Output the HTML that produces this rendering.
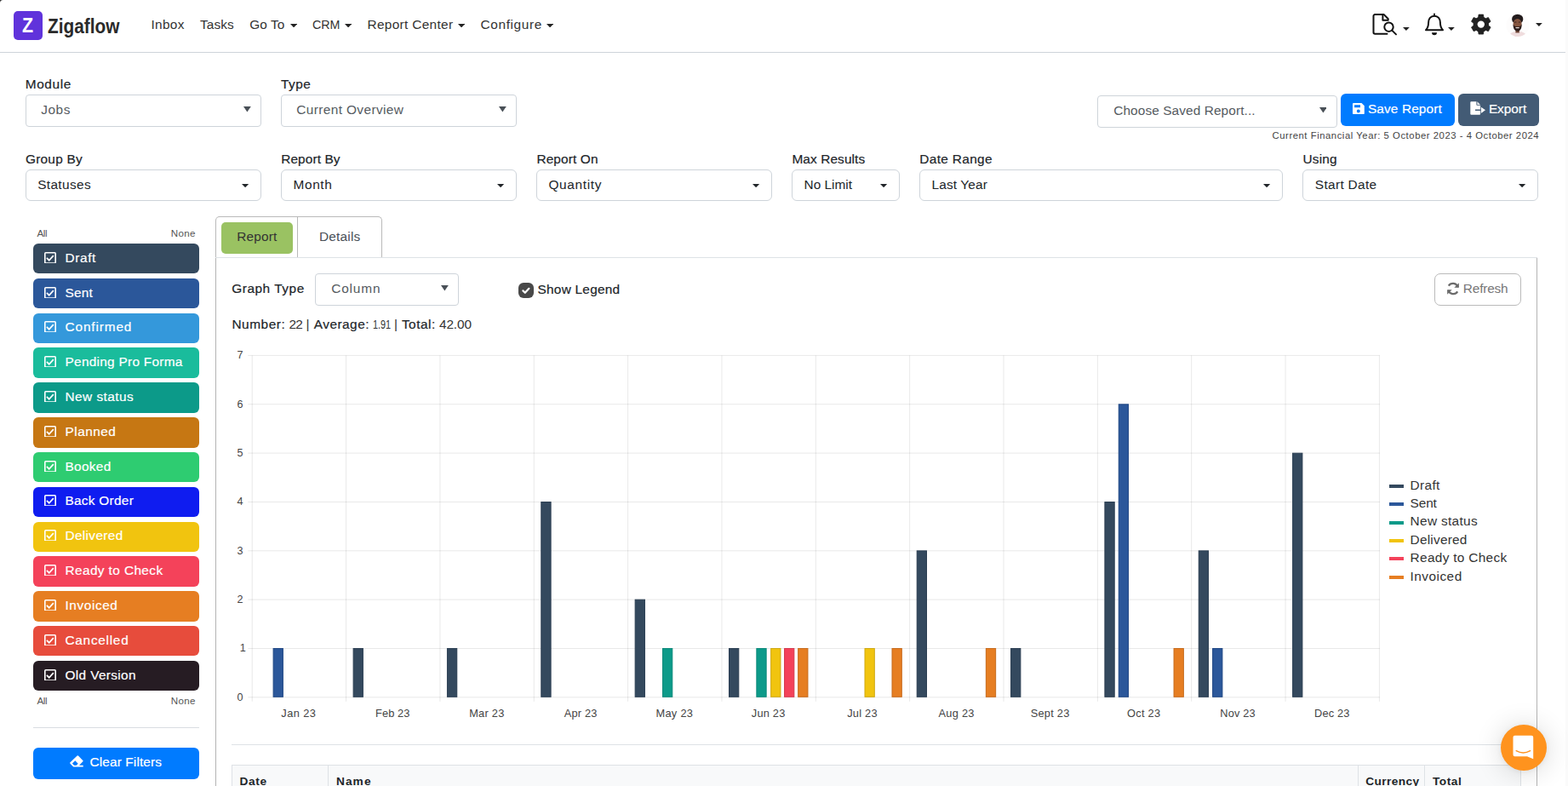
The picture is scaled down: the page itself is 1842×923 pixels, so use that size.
<!DOCTYPE html>
<html lang="en">
<head>
<meta charset="utf-8">
<title>Zigaflow - Report Center</title>
<style>
html,body{margin:0;padding:0;background:#fff;}
body{width:1842px;height:923px;overflow:hidden;font-family:"Liberation Sans",sans-serif;}
#page{position:relative;width:1842px;height:923px;overflow:hidden;background:#fff;}
.b{position:absolute;box-sizing:border-box;display:block;}
.t{position:absolute;white-space:pre;line-height:1;font-family:"Liberation Sans",sans-serif;}
a.t{text-decoration:none;}
label.t{margin:0;}
header,nav,section,aside,main{display:block;margin:0;padding:0;}

</style>
</head>
<body>
<div id="page">
<header class="topbar">
<svg class="b" style="left:0;top:0" width="5" height="5" viewBox="0 0 5 5"><path d="M0 0h3.600A3.600 3.600 0 0 0 0 3.600z" fill="#2e2e2e"/></svg>
<div class="b" style="left:1839px;top:0px;width:3px;height:923px;background:#fafafa"></div>
<div class="b" style="left:0px;top:61px;width:1839px;height:1px;background:#ced4da"></div>
<div class="b" style="left:16px;top:13px;width:34px;height:34px;background:#6033db;border-radius:5px"></div>
<span class="t" style="left:26.1px;top:17.6px;font-size:24.8px;font-weight:700;color:#fff;transform:scaleX(.86);transform-origin:0 0">Z</span>
<span class="t" style="left:56.3px;top:19.1px;font-size:24.5px;font-weight:700;color:#2a2a2a;transform:scaleX(.851);transform-origin:0 0">Zigaflow</span>
<svg class="b" style="left:341.2px;top:28.1px" width="8.2" height="4.4" viewBox="0 0 8.2 4.4"><polygon points="0,0 8.2,0 4.1,4.4" fill="#222"/></svg>
<svg class="b" style="left:405.0px;top:28.1px" width="8.2" height="4.4" viewBox="0 0 8.2 4.4"><polygon points="0,0 8.2,0 4.1,4.4" fill="#222"/></svg>
<svg class="b" style="left:538.0px;top:28.1px" width="8.2" height="4.4" viewBox="0 0 8.2 4.4"><polygon points="0,0 8.2,0 4.1,4.4" fill="#222"/></svg>
<svg class="b" style="left:642.2px;top:28.1px" width="8.2" height="4.4" viewBox="0 0 8.2 4.4"><polygon points="0,0 8.2,0 4.1,4.4" fill="#222"/></svg>
<svg class="b" style="left:1610px;top:13px" width="34" height="32" viewBox="0 0 34 32" fill="none" stroke="#111" stroke-width="2" stroke-linejoin="round" stroke-linecap="round">
<path d="M19.5 26.8H5.2a1.7 1.7 0 0 1-1.7-1.7V5.8a1.7 1.7 0 0 1 1.7-1.7h10.6l5 5.2"/>
<path d="M14.400 4.300v6.500h6.300"/>
<circle cx="21.500" cy="18.700" r="5.200"/>
<path d="M25.2 22.6l4.8 4.8"/>
</svg>
<svg class="b" style="left:1648.1px;top:31.9px" width="7.8" height="4.0" viewBox="0 0 7.8 4.0"><polygon points="0,0 7.8,0 3.9,4.0" fill="#222"/></svg>
<svg class="b" style="left:1672px;top:13px" width="26" height="30" viewBox="0 0 26 30" fill="none" stroke="#111" stroke-width="2" stroke-linejoin="round" stroke-linecap="round">
<path d="M13 3.4v2"/>
<path d="M3 22.2h20c-2.4-2.2-3.1-4.6-3.1-8.6 0-4.600-2.600-7.900-6.900-7.900s-6.900 3.300-6.900 7.900c0 4-0.700 6.400-3.100 8.600z"/>
<path d="M10 25.300h6a3 3 0 0 1-6 0z" fill="#111" stroke="none"/>
</svg>
<svg class="b" style="left:1701.0px;top:31.9px" width="7.8" height="4.0" viewBox="0 0 7.8 4.0"><polygon points="0,0 7.8,0 3.9,4.0" fill="#222"/></svg>
<svg class="b" style="left:1727px;top:15px" width="26" height="28" viewBox="0 0 26 28"><circle cx="12.8" cy="13.6" r="8.9" fill="#212121"/><path d="M9.65 5.38 L10.06 2.12 L15.54 2.12 L15.95 5.38 L18.34 6.76 L21.37 5.49 L24.11 10.24 L21.49 12.22 L21.49 14.98 L24.11 16.96 L21.37 21.71 L18.34 20.44 L15.95 21.82 L15.54 25.08 L10.06 25.08 L9.65 21.82 L7.26 20.44 L4.23 21.71 L1.49 16.96 L4.11 14.98 L4.11 12.22 L1.49 10.24 L4.23 5.49 L7.26 6.76Z M8.70 13.60 a4.1 4.1 0 1 0 8.2 0 a4.1 4.1 0 1 0 -8.2 0Z" fill="#212121" fill-rule="evenodd" stroke="#212121" stroke-width="0.8" stroke-linejoin="round"/><circle cx="12.8" cy="13.6" r="4.2" fill="#fff"/></svg>
<svg class="b" style="left:1769px;top:15px" width="28" height="29" viewBox="0 0 28 29">
<defs><clipPath id="av"><circle cx="14" cy="14.500" r="13.600"/></clipPath></defs>
<circle cx="14" cy="14.500" r="13.600" fill="#fdfcfc"/>
<g clip-path="url(#av)">
<ellipse cx="14" cy="28.600" rx="11" ry="6.800" fill="#efdcdd"/>
<rect x="11.400" y="19.500" width="4.400" height="4" fill="#6f4434"/>
<ellipse cx="13.700" cy="7.400" rx="6.600" ry="5.700" fill="#231c1d"/>
<ellipse cx="13.600" cy="12.900" rx="5" ry="6" fill="#85553f"/>
<path d="M8.500 13.200C8.500 19 10.500 21.600 13.600 21.600S18.700 19 18.700 13.200C17.700 15.700 16.200 16.200 13.600 16.200S9.500 15.700 8.500 13.200z" fill="#2c1d1b"/>
<rect x="11.300" y="16.900" width="4.600" height="1.400" rx="0.700" fill="#eadfdb"/>
<rect x="9.800" y="10.600" width="2.600" height="0.900" fill="#3a2520"/>
<rect x="14.800" y="10.600" width="2.600" height="0.900" fill="#3a2520"/>
</g></svg>
<svg class="b" style="left:1804.0px;top:27.0px" width="7.8" height="4.0" viewBox="0 0 7.8 4.0"><polygon points="0,0 7.8,0 3.9,4.0" fill="#222"/></svg>
</header>
<nav class="mainnav">
<a class="t" style="left:177.4px;top:21.1px;font-size:15.4px;color:#333;letter-spacing:0.36px;">Inbox</a>
<a class="t" style="left:235.0px;top:21.1px;font-size:15.4px;color:#333;letter-spacing:0.09px;">Tasks</a>
<a class="t" style="left:293.2px;top:21.1px;font-size:15.4px;color:#333;letter-spacing:0.10px;">Go To</a>
<a class="t" style="left:366.6px;top:21.1px;font-size:15.4px;color:#333;transform:scaleX(0.927);transform-origin:0 0;">CRM</a>
<a class="t" style="left:431.5px;top:21.1px;font-size:15.4px;color:#333;letter-spacing:0.32px;">Report Center</a>
<a class="t" style="left:564.6px;top:21.1px;font-size:15.4px;color:#333;letter-spacing:0.61px;">Configure</a>
</nav>
<section class="filters">
<div class="b" style="left:30px;top:111px;width:277px;height:38px;border:1px solid #ced4da;border-radius:4px;background:#fff"></div>
<div class="b" style="left:330px;top:111px;width:277px;height:38px;border:1px solid #ced4da;border-radius:4px;background:#fff"></div>
<div class="b" style="left:1289px;top:112px;width:282px;height:38px;border:1px solid #ced4da;border-radius:4px;background:#fff"></div>
<svg class="b" style="left:285.8px;top:125.2px" width="8.8" height="6.6" viewBox="0 0 8.8 6.6"><polygon points="0,0 8.8,0 4.4,6.6" fill="#495057"/></svg>
<svg class="b" style="left:585.9px;top:125.2px" width="8.8" height="6.6" viewBox="0 0 8.8 6.6"><polygon points="0,0 8.8,0 4.4,6.6" fill="#495057"/></svg>
<svg class="b" style="left:1549.5px;top:126.2px" width="8.8" height="6.6" viewBox="0 0 8.8 6.6"><polygon points="0,0 8.8,0 4.4,6.6" fill="#495057"/></svg>
<div class="b" style="left:1575px;top:110px;width:134px;height:38px;background:#007bff;border-radius:6px"></div>
<div class="b" style="left:1713px;top:110px;width:95px;height:38px;background:#435b75;border-radius:6px"></div>
<svg class="b" style="left:1589px;top:120.800px" width="14" height="13.400" viewBox="0 0 14 13.400"><path fill="#fff" fill-rule="evenodd" d="M1.100 0H10.500L13.800 3.300V12.100a1.100 1.100 0 0 1-1.100 1.100H1.100A1.100 1.100 0 0 1 0 12.100V1.100A1.100 1.100 0 0 1 1.100 0zM2.100 2.200v3h6.900v-3zM6.800 7.400a2 2 0 1 0 0 4 2 2 0 0 0 0-4z"/></svg>
<svg class="b" style="left:1727px;top:119px" width="18.400" height="16" viewBox="0 0 18.400 16"><path fill="#fff" d="M1.300 0.200H7.400V4a0.800 0.800 0 0 0 0.800 0.800H12.100V9.600H6V10.900H12.100V14.800a1 1 0 0 1-1 1H1.300a1 1 0 0 1-1-1V1.200a1 1 0 0 1 1-1z"/><path fill="#e9ecf0" d="M8.400 0.300L12 4H8.400z"/><path fill="#fff" d="M12.900 6.700L18 10.300 12.900 13.900z"/></svg>
<div class="b" style="left:30px;top:199px;width:277px;height:37px;border:1px solid #ced4da;border-radius:6px;background:#fff"></div>
<svg class="b" style="left:284.4px;top:216.3px" width="8.2" height="4.2" viewBox="0 0 8.2 4.2"><polygon points="0,0 8.2,0 4.1,4.2" fill="#212529"/></svg>
<div class="b" style="left:330px;top:199px;width:277px;height:37px;border:1px solid #ced4da;border-radius:6px;background:#fff"></div>
<svg class="b" style="left:584.4px;top:216.3px" width="8.2" height="4.2" viewBox="0 0 8.2 4.2"><polygon points="0,0 8.2,0 4.1,4.2" fill="#212529"/></svg>
<div class="b" style="left:630px;top:199px;width:277px;height:37px;border:1px solid #ced4da;border-radius:6px;background:#fff"></div>
<svg class="b" style="left:884.4px;top:216.3px" width="8.2" height="4.2" viewBox="0 0 8.2 4.2"><polygon points="0,0 8.2,0 4.1,4.2" fill="#212529"/></svg>
<div class="b" style="left:930px;top:199px;width:127px;height:37px;border:1px solid #ced4da;border-radius:6px;background:#fff"></div>
<svg class="b" style="left:1034.4px;top:216.3px" width="8.2" height="4.2" viewBox="0 0 8.2 4.2"><polygon points="0,0 8.2,0 4.1,4.2" fill="#212529"/></svg>
<div class="b" style="left:1080px;top:199px;width:427px;height:37px;border:1px solid #ced4da;border-radius:6px;background:#fff"></div>
<svg class="b" style="left:1484.4px;top:216.3px" width="8.2" height="4.2" viewBox="0 0 8.2 4.2"><polygon points="0,0 8.2,0 4.1,4.2" fill="#212529"/></svg>
<div class="b" style="left:1530px;top:199px;width:277px;height:37px;border:1px solid #ced4da;border-radius:6px;background:#fff"></div>
<svg class="b" style="left:1784.4px;top:216.3px" width="8.2" height="4.2" viewBox="0 0 8.2 4.2"><polygon points="0,0 8.2,0 4.1,4.2" fill="#212529"/></svg>
<label class="t" style="left:29.7px;top:91.2px;font-size:15.4px;color:#212529;letter-spacing:0.64px;-webkit-text-stroke:0.2px #212529;">Module</label>
<label class="t" style="left:330.0px;top:91.2px;font-size:15.4px;color:#212529;letter-spacing:0.48px;-webkit-text-stroke:0.2px #212529;">Type</label>
<label class="t" style="left:30.0px;top:179.2px;font-size:15.4px;color:#212529;letter-spacing:0.23px;-webkit-text-stroke:0.2px #212529;">Group By</label>
<label class="t" style="left:330.2px;top:179.2px;font-size:15.4px;color:#212529;letter-spacing:0.11px;-webkit-text-stroke:0.2px #212529;">Report By</label>
<label class="t" style="left:630.4px;top:179.2px;font-size:15.4px;color:#212529;letter-spacing:0.14px;-webkit-text-stroke:0.2px #212529;">Report On</label>
<label class="t" style="left:930.4px;top:179.2px;font-size:15.4px;color:#212529;letter-spacing:0.11px;-webkit-text-stroke:0.2px #212529;">Max Results</label>
<label class="t" style="left:1080.3px;top:179.2px;font-size:15.4px;color:#212529;letter-spacing:0.35px;-webkit-text-stroke:0.2px #212529;">Date Range</label>
<label class="t" style="left:1530.6px;top:179.2px;font-size:15.4px;color:#212529;letter-spacing:0.16px;-webkit-text-stroke:0.2px #212529;">Using</label>
<span class="t" style="left:48.2px;top:121.2px;font-size:15.4px;color:#555b61;letter-spacing:0.59px;">Jobs</span>
<span class="t" style="left:348.2px;top:121.2px;font-size:15.4px;color:#555b61;letter-spacing:0.40px;">Current Overview</span>
<span class="t" style="left:1308.2px;top:122.4px;font-size:15.4px;color:#555b61;letter-spacing:0.10px;">Choose Saved Report...</span>
<span class="t" style="left:1606.9px;top:120.2px;font-size:15.4px;color:#fff;letter-spacing:0.13px;-webkit-text-stroke:0.2px #fff;">Save Report</span>
<span class="t" style="left:1748.9px;top:120.2px;font-size:15.4px;color:#fff;letter-spacing:-0.04px;-webkit-text-stroke:0.2px #fff;">Export</span>
<span class="t" style="left:1494.6px;top:154.0px;font-size:11.3px;color:#444;letter-spacing:0.54px;">Current Financial Year: 5 October 2023 - 4 October 2024</span>
<span class="t" style="left:44.2px;top:209.2px;font-size:15.4px;color:#212529;letter-spacing:0.36px;">Statuses</span>
<span class="t" style="left:344.5px;top:209.2px;font-size:15.4px;color:#212529;letter-spacing:0.63px;">Month</span>
<span class="t" style="left:644.5px;top:209.2px;font-size:15.4px;color:#212529;letter-spacing:0.65px;">Quantity</span>
<span class="t" style="left:944.6px;top:209.2px;font-size:15.4px;color:#212529;letter-spacing:-0.01px;">No Limit</span>
<span class="t" style="left:1094.5px;top:209.2px;font-size:15.4px;color:#212529;letter-spacing:0.15px;">Last Year</span>
<span class="t" style="left:1544.8px;top:209.2px;font-size:15.4px;color:#212529;letter-spacing:0.34px;">Start Date</span>
</section>
<aside class="statuses">
<div class="b" style="left:39px;top:286px;width:195px;height:35px;background:#34495e;border-radius:6px"></div>
<svg class="b" style="left:51.8px;top:295.60px" width="14" height="13.800" viewBox="0 0 14 13.800" fill="none" stroke="#fff"><rect x="0.800" y="0.800" width="12.400" height="12.200" rx="0.900" stroke-width="1.600"/><path d="M2.900 6.900l2.800 2.800 5.100-5.600" stroke-width="1.700"/></svg>
<div class="b" style="left:39px;top:327px;width:195px;height:35px;background:#2b579a;border-radius:6px"></div>
<svg class="b" style="left:51.8px;top:336.60px" width="14" height="13.800" viewBox="0 0 14 13.800" fill="none" stroke="#fff"><rect x="0.800" y="0.800" width="12.400" height="12.200" rx="0.900" stroke-width="1.600"/><path d="M2.900 6.900l2.800 2.800 5.100-5.600" stroke-width="1.700"/></svg>
<div class="b" style="left:39px;top:368px;width:195px;height:35px;background:#3498db;border-radius:6px"></div>
<svg class="b" style="left:51.8px;top:376.60px" width="14" height="13.800" viewBox="0 0 14 13.800" fill="none" stroke="#fff"><rect x="0.800" y="0.800" width="12.400" height="12.200" rx="0.900" stroke-width="1.600"/><path d="M2.900 6.900l2.800 2.800 5.100-5.600" stroke-width="1.700"/></svg>
<div class="b" style="left:39px;top:408px;width:195px;height:36px;background:#1abc9c;border-radius:6px"></div>
<svg class="b" style="left:51.8px;top:417.60px" width="14" height="13.800" viewBox="0 0 14 13.800" fill="none" stroke="#fff"><rect x="0.800" y="0.800" width="12.400" height="12.200" rx="0.900" stroke-width="1.600"/><path d="M2.900 6.900l2.800 2.800 5.100-5.600" stroke-width="1.700"/></svg>
<div class="b" style="left:39px;top:449px;width:195px;height:36px;background:#0c9a89;border-radius:6px"></div>
<svg class="b" style="left:51.8px;top:458.60px" width="14" height="13.800" viewBox="0 0 14 13.800" fill="none" stroke="#fff"><rect x="0.800" y="0.800" width="12.400" height="12.200" rx="0.900" stroke-width="1.600"/><path d="M2.900 6.900l2.800 2.800 5.100-5.600" stroke-width="1.700"/></svg>
<div class="b" style="left:39px;top:490px;width:195px;height:36px;background:#c67713;border-radius:6px"></div>
<svg class="b" style="left:51.8px;top:499.60px" width="14" height="13.800" viewBox="0 0 14 13.800" fill="none" stroke="#fff"><rect x="0.800" y="0.800" width="12.400" height="12.200" rx="0.900" stroke-width="1.600"/><path d="M2.900 6.900l2.800 2.800 5.100-5.600" stroke-width="1.700"/></svg>
<div class="b" style="left:39px;top:531px;width:195px;height:35px;background:#2ecc71;border-radius:6px"></div>
<svg class="b" style="left:51.8px;top:540.60px" width="14" height="13.800" viewBox="0 0 14 13.800" fill="none" stroke="#fff"><rect x="0.800" y="0.800" width="12.400" height="12.200" rx="0.900" stroke-width="1.600"/><path d="M2.900 6.900l2.800 2.800 5.100-5.600" stroke-width="1.700"/></svg>
<div class="b" style="left:39px;top:572px;width:195px;height:35px;background:#0f1cf0;border-radius:6px"></div>
<svg class="b" style="left:51.8px;top:580.60px" width="14" height="13.800" viewBox="0 0 14 13.800" fill="none" stroke="#fff"><rect x="0.800" y="0.800" width="12.400" height="12.200" rx="0.900" stroke-width="1.600"/><path d="M2.900 6.900l2.800 2.800 5.100-5.600" stroke-width="1.700"/></svg>
<div class="b" style="left:39px;top:613px;width:195px;height:35px;background:#f1c40f;border-radius:6px"></div>
<svg class="b" style="left:51.8px;top:621.60px" width="14" height="13.800" viewBox="0 0 14 13.800" fill="none" stroke="#fff"><rect x="0.800" y="0.800" width="12.400" height="12.200" rx="0.900" stroke-width="1.600"/><path d="M2.900 6.900l2.800 2.800 5.100-5.600" stroke-width="1.700"/></svg>
<div class="b" style="left:39px;top:653px;width:195px;height:36px;background:#f4425a;border-radius:6px"></div>
<svg class="b" style="left:51.8px;top:662.60px" width="14" height="13.800" viewBox="0 0 14 13.800" fill="none" stroke="#fff"><rect x="0.800" y="0.800" width="12.400" height="12.200" rx="0.900" stroke-width="1.600"/><path d="M2.900 6.900l2.800 2.800 5.100-5.600" stroke-width="1.700"/></svg>
<div class="b" style="left:39px;top:694px;width:195px;height:36px;background:#e67e22;border-radius:6px"></div>
<svg class="b" style="left:51.8px;top:703.60px" width="14" height="13.800" viewBox="0 0 14 13.800" fill="none" stroke="#fff"><rect x="0.800" y="0.800" width="12.400" height="12.200" rx="0.900" stroke-width="1.600"/><path d="M2.900 6.900l2.800 2.800 5.100-5.600" stroke-width="1.700"/></svg>
<div class="b" style="left:39px;top:735px;width:195px;height:35px;background:#e74c3c;border-radius:6px"></div>
<svg class="b" style="left:51.8px;top:744.60px" width="14" height="13.800" viewBox="0 0 14 13.800" fill="none" stroke="#fff"><rect x="0.800" y="0.800" width="12.400" height="12.200" rx="0.900" stroke-width="1.600"/><path d="M2.900 6.900l2.800 2.800 5.100-5.600" stroke-width="1.700"/></svg>
<div class="b" style="left:39px;top:776px;width:195px;height:35px;background:#261c23;border-radius:6px"></div>
<svg class="b" style="left:51.8px;top:785.60px" width="14" height="13.800" viewBox="0 0 14 13.800" fill="none" stroke="#fff"><rect x="0.800" y="0.800" width="12.400" height="12.200" rx="0.900" stroke-width="1.600"/><path d="M2.900 6.900l2.800 2.800 5.100-5.600" stroke-width="1.700"/></svg>
<div class="b" style="left:39px;top:854px;width:195px;height:1px;background:#d9dde1"></div>
<div class="b" style="left:39px;top:878px;width:195px;height:37px;background:#007bff;border-radius:6px"></div>
<svg class="b" style="left:82.400px;top:887.400px" width="16" height="14" viewBox="0 0 16 14"><path fill="#fff" fill-rule="evenodd" d="M8.600 0.600a1 1 0 0 1 1.400 0L15.300 5.900a1 1 0 0 1 0 1.400L11 11.700H15.700V13.400H4.200L0.500 9.700a1 1 0 0 1 0-1.400zM6.300 6.300L2.900 9.500 5 11.700H7.800L9.700 9.800z"/></svg>
<span class="t" style="left:43.4px;top:268.4px;font-size:11.6px;color:#555;letter-spacing:-0.30px;">All</span>
<span class="t" style="left:200.8px;top:268.4px;font-size:11.6px;color:#555;letter-spacing:0.33px;">None</span>
<span class="t" style="left:43.4px;top:817.2px;font-size:11.6px;color:#555;letter-spacing:-0.30px;">All</span>
<span class="t" style="left:200.8px;top:817.2px;font-size:11.6px;color:#555;letter-spacing:0.33px;">None</span>
<span class="t" style="left:76.5px;top:295.0px;font-size:15.4px;color:#fff;letter-spacing:0.61px;-webkit-text-stroke:0.2px #fff;">Draft</span>
<span class="t" style="left:76.5px;top:336.0px;font-size:15.4px;color:#fff;letter-spacing:0.21px;-webkit-text-stroke:0.2px #fff;">Sent</span>
<span class="t" style="left:76.5px;top:376.0px;font-size:15.4px;color:#fff;letter-spacing:0.86px;-webkit-text-stroke:0.2px #fff;">Confirmed</span>
<span class="t" style="left:76.5px;top:417.0px;font-size:15.4px;color:#fff;letter-spacing:0.28px;-webkit-text-stroke:0.2px #fff;">Pending Pro Forma</span>
<span class="t" style="left:76.5px;top:458.0px;font-size:15.4px;color:#fff;letter-spacing:0.46px;-webkit-text-stroke:0.2px #fff;">New status</span>
<span class="t" style="left:76.5px;top:499.0px;font-size:15.4px;color:#fff;letter-spacing:0.49px;-webkit-text-stroke:0.2px #fff;">Planned</span>
<span class="t" style="left:76.5px;top:540.0px;font-size:15.4px;color:#fff;letter-spacing:0.32px;-webkit-text-stroke:0.2px #fff;">Booked</span>
<span class="t" style="left:76.5px;top:580.0px;font-size:15.4px;color:#fff;letter-spacing:0.27px;-webkit-text-stroke:0.2px #fff;">Back Order</span>
<span class="t" style="left:76.5px;top:621.0px;font-size:15.4px;color:#fff;letter-spacing:0.34px;-webkit-text-stroke:0.2px #fff;">Delivered</span>
<span class="t" style="left:76.5px;top:662.0px;font-size:15.4px;color:#fff;letter-spacing:0.39px;-webkit-text-stroke:0.2px #fff;">Ready to Check</span>
<span class="t" style="left:76.5px;top:703.0px;font-size:15.4px;color:#fff;letter-spacing:0.58px;-webkit-text-stroke:0.2px #fff;">Invoiced</span>
<span class="t" style="left:76.5px;top:744.0px;font-size:15.4px;color:#fff;letter-spacing:0.72px;-webkit-text-stroke:0.2px #fff;">Cancelled</span>
<span class="t" style="left:76.5px;top:785.0px;font-size:15.4px;color:#fff;letter-spacing:0.35px;-webkit-text-stroke:0.2px #fff;">Old Version</span>
<span class="t" style="left:105.5px;top:887.4px;font-size:15.4px;color:#fff;letter-spacing:0.13px;-webkit-text-stroke:0.2px #fff;">Clear Filters</span>
</aside>
<main class="report">
<div class="b" style="left:253px;top:254px;width:196px;height:49px;border:1px solid #b9b9b9;border-bottom:none;border-radius:5px 5px 0 0;background:#fff"></div>
<div class="b" style="left:349px;top:255px;width:1px;height:48px;background:#b9b9b9"></div>
<div class="b" style="left:260px;top:261px;width:84px;height:37px;background:#9ac262;border-radius:5px"></div>
<div class="b" style="left:253px;top:302px;width:1553px;height:1px;background:#dee2e6"></div>
<div class="b" style="left:253px;top:303px;width:1px;height:620px;background:#b4b4b4"></div>
<div class="b" style="left:1805px;top:303px;width:1px;height:620px;background:#b4b4b4"></div>
<div class="b" style="left:370px;top:321px;width:169px;height:38px;border:1px solid #ced4da;border-radius:4px;background:#fff"></div>
<svg class="b" style="left:518.2px;top:335.1px" width="8.8" height="6.6" viewBox="0 0 8.8 6.6"><polygon points="0,0 8.8,0 4.4,6.6" fill="#495057"/></svg>
<div class="b" style="left:609px;top:332px;width:18px;height:18px;background:#494949;border-radius:6px"></div>
<svg class="b" style="left:609px;top:332px" width="18" height="18" viewBox="0 0 18 18" fill="none" stroke="#fff" stroke-width="2.200" stroke-linecap="round" stroke-linejoin="round"><path d="M5.400 9.400l2.400 2.400 4.600-5"/></svg>
<div class="b" style="left:1685px;top:321px;width:102px;height:38px;border:1px solid #bababa;border-radius:7px;background:#fff"></div>
<svg class="b" style="left:1699px;top:330.600px" width="16" height="16" viewBox="0 0 16 16" fill="none" stroke="#6b6b6b" stroke-width="2.300"><path d="M13.600 6.300A6 6 0 0 0 2.800 4.600"/><path d="M2.400 9.700a6 6 0 0 0 10.800 1.700"/><path d="M14.900 1.200v5.600H9.300z" fill="#6b6b6b" stroke="none"/><path d="M1.100 14.800V9.200h5.600z" fill="#6b6b6b" stroke="none"/></svg>
<span class="t" style="left:278.3px;top:270.0px;font-size:15.4px;color:#333;letter-spacing:0.14px;">Report</span>
<span class="t" style="left:374.9px;top:270.0px;font-size:15.4px;color:#495057;letter-spacing:0.23px;">Details</span>
<span class="t" style="left:272.2px;top:331.3px;font-size:15.4px;color:#212529;letter-spacing:0.55px;-webkit-text-stroke:0.2px #212529;">Graph Type</span>
<span class="t" style="left:389.2px;top:331.3px;font-size:15.4px;color:#555b61;letter-spacing:0.85px;">Column</span>
<span class="t" style="left:631.5px;top:331.8px;font-size:15.4px;color:#212529;letter-spacing:0.25px;-webkit-text-stroke:0.2px #212529;">Show Legend</span>
<span class="t" style="left:1718.8px;top:330.7px;font-size:15.4px;color:#777;letter-spacing:-0.17px;">Refresh</span>
<span class="t" style="left:272.4px;top:373.3px;font-size:15.4px;color:#212529;letter-spacing:0.55px;-webkit-text-stroke:0.2px #212529;">Number:</span>
<span class="t" style="left:339.5px;top:373.3px;font-size:15.4px;color:#333;letter-spacing:-0.82px;">22</span>
<span class="t" style="left:359.6px;top:373.3px;font-size:15.4px;color:#333;">|</span>
<span class="t" style="left:368.8px;top:373.3px;font-size:15.4px;color:#212529;letter-spacing:0.48px;-webkit-text-stroke:0.2px #212529;">Average:</span>
<span class="t" style="left:437.8px;top:373.3px;font-size:15.4px;color:#333;transform:scaleX(0.704);transform-origin:0 0;">1.91</span>
<span class="t" style="left:462.9px;top:373.3px;font-size:15.4px;color:#333;">|</span>
<span class="t" style="left:471.9px;top:373.3px;font-size:15.4px;color:#212529;letter-spacing:0.50px;-webkit-text-stroke:0.2px #212529;">Total:</span>
<span class="t" style="left:516.0px;top:373.3px;font-size:15.4px;color:#333;letter-spacing:-0.13px;">42.00</span>
</main>
<section class="chart">
<svg class="b" style="left:286px;top:410px" width="1340" height="420" viewBox="0 0 1340 420"><rect x="5.30" y="408.30" width="1329.60" height="1" fill="#000" fill-opacity="0.09"/><rect x="5.30" y="350.96" width="1329.60" height="1" fill="#000" fill-opacity="0.09"/><rect x="5.30" y="293.61" width="1329.60" height="1" fill="#000" fill-opacity="0.09"/><rect x="5.30" y="236.27" width="1329.60" height="1" fill="#000" fill-opacity="0.09"/><rect x="5.30" y="178.93" width="1329.60" height="1" fill="#000" fill-opacity="0.09"/><rect x="5.30" y="121.59" width="1329.60" height="1" fill="#000" fill-opacity="0.09"/><rect x="5.30" y="64.24" width="1329.60" height="1" fill="#000" fill-opacity="0.09"/><rect x="5.30" y="6.90" width="1329.60" height="1" fill="#000" fill-opacity="0.09"/><rect x="9.70" y="7.40" width="1" height="406.40" fill="#000" fill-opacity="0.09"/><rect x="120.05" y="7.40" width="1" height="406.40" fill="#000" fill-opacity="0.09"/><rect x="230.40" y="7.40" width="1" height="406.40" fill="#000" fill-opacity="0.09"/><rect x="340.75" y="7.40" width="1" height="406.40" fill="#000" fill-opacity="0.09"/><rect x="451.10" y="7.40" width="1" height="406.40" fill="#000" fill-opacity="0.09"/><rect x="561.45" y="7.40" width="1" height="406.40" fill="#000" fill-opacity="0.09"/><rect x="671.80" y="7.40" width="1" height="406.40" fill="#000" fill-opacity="0.09"/><rect x="782.15" y="7.40" width="1" height="406.40" fill="#000" fill-opacity="0.09"/><rect x="892.50" y="7.40" width="1" height="406.40" fill="#000" fill-opacity="0.09"/><rect x="1002.85" y="7.40" width="1" height="406.40" fill="#000" fill-opacity="0.09"/><rect x="1113.20" y="7.40" width="1" height="406.40" fill="#000" fill-opacity="0.09"/><rect x="1223.55" y="7.40" width="1" height="406.40" fill="#000" fill-opacity="0.09"/><rect x="1333.90" y="7.40" width="1" height="406.40" fill="#000" fill-opacity="0.09"/><rect x="35.10" y="351.56" width="11.30" height="56.74" fill="#2b579a" stroke="#1f4684" stroke-width="1"/><rect x="129.10" y="351.56" width="11.30" height="56.74" fill="#34495e" stroke="#2b3e52" stroke-width="1"/><rect x="239.45" y="351.56" width="11.30" height="56.74" fill="#34495e" stroke="#2b3e52" stroke-width="1"/><rect x="349.80" y="179.53" width="11.30" height="228.77" fill="#34495e" stroke="#2b3e52" stroke-width="1"/><rect x="460.15" y="294.21" width="11.30" height="114.09" fill="#34495e" stroke="#2b3e52" stroke-width="1"/><rect x="492.50" y="351.56" width="11.30" height="56.74" fill="#0c9a89" stroke="#0d897a" stroke-width="1"/><rect x="570.50" y="351.56" width="11.30" height="56.74" fill="#34495e" stroke="#2b3e52" stroke-width="1"/><rect x="602.85" y="351.56" width="11.30" height="56.74" fill="#0c9a89" stroke="#0d897a" stroke-width="1"/><rect x="619.65" y="351.56" width="11.30" height="56.74" fill="#f1c40f" stroke="#cfa811" stroke-width="1"/><rect x="635.55" y="351.56" width="11.30" height="56.74" fill="#f4425a" stroke="#d5394e" stroke-width="1"/><rect x="651.65" y="351.56" width="11.30" height="56.74" fill="#e67e22" stroke="#c66a1c" stroke-width="1"/><rect x="730.00" y="351.56" width="11.30" height="56.74" fill="#f1c40f" stroke="#cfa811" stroke-width="1"/><rect x="762.00" y="351.56" width="11.30" height="56.74" fill="#e67e22" stroke="#c66a1c" stroke-width="1"/><rect x="791.20" y="236.87" width="11.30" height="171.43" fill="#34495e" stroke="#2b3e52" stroke-width="1"/><rect x="872.35" y="351.56" width="11.30" height="56.74" fill="#e67e22" stroke="#c66a1c" stroke-width="1"/><rect x="901.55" y="351.56" width="11.30" height="56.74" fill="#34495e" stroke="#2b3e52" stroke-width="1"/><rect x="1011.90" y="179.53" width="11.30" height="228.77" fill="#34495e" stroke="#2b3e52" stroke-width="1"/><rect x="1028.25" y="64.84" width="11.30" height="343.46" fill="#2b579a" stroke="#1f4684" stroke-width="1"/><rect x="1093.05" y="351.56" width="11.30" height="56.74" fill="#e67e22" stroke="#c66a1c" stroke-width="1"/><rect x="1122.25" y="236.87" width="11.30" height="171.43" fill="#34495e" stroke="#2b3e52" stroke-width="1"/><rect x="1138.60" y="351.56" width="11.30" height="56.74" fill="#2b579a" stroke="#1f4684" stroke-width="1"/><rect x="1232.60" y="122.19" width="11.30" height="286.11" fill="#34495e" stroke="#2b3e52" stroke-width="1"/></svg>
<div class="b" style="left:1632px;top:569.0px;width:17px;height:4px;background:#34495e"></div>
<div class="b" style="left:1632px;top:590.3px;width:17px;height:4px;background:#2b579a"></div>
<div class="b" style="left:1632px;top:611.6px;width:17px;height:4px;background:#0c9a89"></div>
<div class="b" style="left:1632px;top:632.9px;width:17px;height:4px;background:#f1c40f"></div>
<div class="b" style="left:1632px;top:654.2px;width:17px;height:4px;background:#f4425a"></div>
<div class="b" style="left:1632px;top:675.5px;width:17px;height:4px;background:#e67e22"></div>
<span class="t" style="left:278.4px;top:812.5px;font-size:12.6px;color:#444;">0</span>
<span class="t" style="left:281.7px;top:755.2px;font-size:12.6px;color:#444;">1</span>
<span class="t" style="left:278.4px;top:697.8px;font-size:12.6px;color:#444;">2</span>
<span class="t" style="left:278.4px;top:640.5px;font-size:12.6px;color:#444;">3</span>
<span class="t" style="left:278.4px;top:583.2px;font-size:12.6px;color:#444;">4</span>
<span class="t" style="left:278.4px;top:525.8px;font-size:12.6px;color:#444;">5</span>
<span class="t" style="left:278.4px;top:468.5px;font-size:12.6px;color:#444;">6</span>
<span class="t" style="left:278.4px;top:411.1px;font-size:12.6px;color:#444;">7</span>
<span class="t" style="left:330.3px;top:832.3px;font-size:12.8px;color:#444;letter-spacing:0.45px;">Jan 23</span>
<span class="t" style="left:441.1px;top:832.3px;font-size:12.8px;color:#444;letter-spacing:0.07px;">Feb 23</span>
<span class="t" style="left:551.2px;top:832.3px;font-size:12.8px;color:#444;letter-spacing:0.27px;">Mar 23</span>
<span class="t" style="left:662.8px;top:832.3px;font-size:12.8px;color:#444;letter-spacing:0.18px;">Apr 23</span>
<span class="t" style="left:770.5px;top:832.3px;font-size:12.8px;color:#444;letter-spacing:0.29px;">May 23</span>
<span class="t" style="left:882.8px;top:832.3px;font-size:12.8px;color:#444;letter-spacing:0.21px;">Jun 23</span>
<span class="t" style="left:995.2px;top:832.3px;font-size:12.8px;color:#444;letter-spacing:0.25px;">Jul 23</span>
<span class="t" style="left:1102.5px;top:832.3px;font-size:12.8px;color:#444;letter-spacing:0.27px;">Aug 23</span>
<span class="t" style="left:1210.7px;top:832.3px;font-size:12.8px;color:#444;letter-spacing:0.25px;">Sept 23</span>
<span class="t" style="left:1324.0px;top:832.3px;font-size:12.8px;color:#444;letter-spacing:0.28px;">Oct 23</span>
<span class="t" style="left:1433.3px;top:832.3px;font-size:12.8px;color:#444;letter-spacing:0.15px;">Nov 23</span>
<span class="t" style="left:1544.0px;top:832.3px;font-size:12.8px;color:#444;letter-spacing:0.15px;">Dec 23</span>
<span class="t" style="left:1656.6px;top:562.0px;font-size:15.4px;color:#333;letter-spacing:0.36px;">Draft</span>
<span class="t" style="left:1656.6px;top:583.0px;font-size:15.4px;color:#333;letter-spacing:-0.12px;">Sent</span>
<span class="t" style="left:1656.6px;top:604.0px;font-size:15.4px;color:#333;letter-spacing:0.32px;">New status</span>
<span class="t" style="left:1656.6px;top:626.0px;font-size:15.4px;color:#333;letter-spacing:0.22px;">Delivered</span>
<span class="t" style="left:1656.6px;top:647.0px;font-size:15.4px;color:#333;letter-spacing:0.31px;">Ready to Check</span>
<span class="t" style="left:1656.6px;top:669.0px;font-size:15.4px;color:#333;letter-spacing:0.47px;">Invoiced</span>
</section>
<section class="results">
<div class="b" style="left:272px;top:874px;width:1515px;height:1px;background:#dee2e6"></div>
<div class="b" style="left:272px;top:898px;width:1515px;height:30px;background:#f8f9fa;border:1px solid #dee2e6"></div>
<div class="b" style="left:385px;top:898px;width:1px;height:30px;background:#dee2e6"></div>
<div class="b" style="left:1595px;top:898px;width:1px;height:30px;background:#dee2e6"></div>
<div class="b" style="left:1673px;top:898px;width:1px;height:30px;background:#dee2e6"></div>
<span class="t" style="left:281.5px;top:910.8px;font-size:13.7px;color:#212529;letter-spacing:0.61px;font-weight:700;">Date</span>
<span class="t" style="left:394.9px;top:910.8px;font-size:13.7px;color:#212529;letter-spacing:1.11px;font-weight:700;">Name</span>
<span class="t" style="left:1604.2px;top:910.8px;font-size:13.7px;color:#212529;letter-spacing:0.41px;font-weight:700;">Currency</span>
<span class="t" style="left:1683.0px;top:910.8px;font-size:13.7px;color:#212529;letter-spacing:0.50px;font-weight:700;">Total</span>
</section>
<div class="chat">
<div class="b" style="left:1763px;top:851px;width:54px;height:54px;background:#ff931e;border-radius:50%;box-shadow:0 1px 6px 0 rgba(0,0,0,.06),0 2px 32px 0 rgba(0,0,0,.16)"></div>
<svg class="b" style="left:1776px;top:862px" width="28" height="30" viewBox="0 0 28 30"><path fill="#fff" d="M3.500 1.800h19.700a2 2 0 0 1 2 2V29.300l-7.200-3H3.500a2 2 0 0 1-2-2V3.800a2 2 0 0 1 2-2z"/><path d="M5.200 19.700q8.200 4.700 16.400 0" fill="none" stroke="#ff931e" stroke-width="1.500" stroke-linecap="round"/></svg>
</div>
</div>
</body>
</html>
